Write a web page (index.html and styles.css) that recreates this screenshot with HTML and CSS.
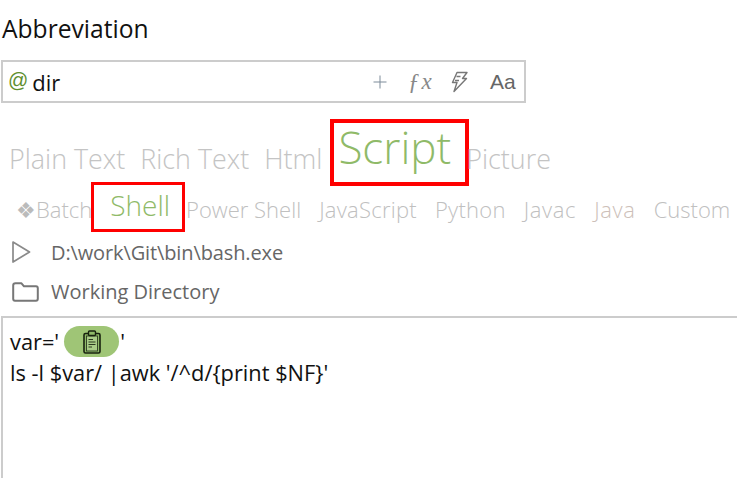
FILE: index.html
```
<!DOCTYPE html>
<html lang="en">
<head>
<meta charset="utf-8">
<title>Abbreviation</title>
<link rel="stylesheet" href="styles.css">
</head>
<body>
<main class="page">
  <h1 class="title">Abbreviation</h1>
  <div class="abbr-input">
    <span class="at">@</span>
    <span class="abbr-value">dir</span>
    <div class="tools">
      <svg class="tool-plus" width="14" height="14" viewBox="0 0 14 14"><path d="M7 0.5V13.5M0.5 7H13.5" stroke="#7d8b99" stroke-width="1" fill="none"/></svg>
      <span class="tool-fx">ƒx</span>
      <svg class="tool-bolt" width="20" height="22" viewBox="0 0 20 22"><path d="M8 1.5H18L13.5 7.5H17.5L5 20.5L8 11.5H3.5L8 1.5ZM7.5 5.5L11.5 5.5M6 9.5H10" stroke="#777" stroke-width="1.4" fill="none" stroke-linejoin="round"/></svg>
      <span class="tool-aa">Aa</span>
    </div>
  </div>
  <nav class="tabs">
    <span class="tab">Plain Text</span>
    <span class="tab">Rich Text</span>
    <span class="tab">Html</span>
    <span class="tab tab-active">Script</span>
    <span class="tab tab-last">Picture</span>
  </nav>
  <nav class="subtabs">
    <span class="sub sub-batch"><span class="diamonds">❖</span>Batch</span>
    <span class="sub sub-active">Shell</span>
    <span class="sub">Power Shell</span>
    <span class="sub sub-mid">JavaScript</span>
    <span class="sub sub-mid">Python</span>
    <span class="sub sub-wide">Javac</span>
    <span class="sub sub-wide sub-warm">Java</span>
    <span class="sub">Custom</span>
  </nav>
  <div class="path-row path-run">
    <svg width="20" height="24" viewBox="0 0 20 24"><path d="M2 2L18.500 12L2 22Z" stroke="#8a8a8a" stroke-width="1.700" fill="none" stroke-linejoin="round"/></svg>
    <span class="path-text">D:\work\Git\bin\bash.exe</span>
  </div>
  <div class="path-row path-dir">
    <svg width="27" height="20" viewBox="0 0 27 20"><path d="M1.200 3.500C1.200 2 2.200 1.300 3.500 1.300H9.500L12 4.300H24C25.200 4.300 25.800 5 25.800 6.200V16.800C25.800 18 25.200 18.700 24 18.700H3C1.800 18.700 1.200 18 1.200 16.800Z" stroke="#777777" stroke-width="2" fill="none" stroke-linejoin="round"/></svg>
    <span class="path-text">Working Directory</span>
  </div>
  <div class="editor">
    <div class="code-line">var='<span class="chip"><svg width="20" height="24" viewBox="0 0 20 24"><rect x="2" y="3.500" width="16" height="19.500" rx="1.500" fill="#8fba68" stroke="#18220f" stroke-width="1.600"/><rect x="4.500" y="6" width="11" height="15" fill="#a9cc87" stroke="#2c3a20" stroke-width="0.900"/><rect x="6.500" y="1" width="7" height="4.500" rx="1" fill="#8fba68" stroke="#18220f" stroke-width="1.400"/><path d="M6.500 9.500H11M6.500 12H13.500M6.500 14.500H13.500M6.500 17H10" stroke="#2c3a20" stroke-width="1.100"/></svg></span>'</div>
    <div class="code-line">ls -l $var/ |awk '/^d/{print $NF}'</div>
  </div>
</main>
</body>
</html>
```

FILE: styles.css
```
* { box-sizing: border-box; }
html, body { margin: 0; padding: 0; background: #fff; }
body { width: 737px; height: 478px; overflow: hidden; font-family: "Open Sans", "Noto Sans", sans-serif; }
.page { display: flex; flex-direction: column; height: 478px; }
.title { margin: 0; padding: 13px 0 0 2px; height: 60px; font-size: 24.600px; line-height: 32px; font-weight: 400; color: #111; }
.abbr-input { display: flex; align-items: center; width: 525px; height: 43px; margin-left: 1px; border: 2px solid #cccccc; padding: 0 7px 0 5px; }
.at { font-family: "Liberation Sans", sans-serif; font-size: 20px; color: #5f8f2f; margin-top: -4px; line-height: 24px; }
.abbr-value { font-size: 22px; line-height: 30px; margin-left: 4px; color: #111; }
.tools { margin-left: auto; display: flex; align-items: center; }
.tool-plus { margin-right: 21px; }
.tool-fx { font-family: "Liberation Serif", serif; font-style: italic; font-size: 23px; color: #888; width: 22px; letter-spacing: 2px; margin-right: 19px; }
.tool-bolt { margin-right: 21px; }
.tool-aa { font-family: "Liberation Sans", sans-serif; font-size: 21px; color: #666; width: 27px; }
.tabs { display: flex; align-items: flex-end; height: 82px; padding: 0 0 0 9px; }
.tab { font-size: 26.900px; font-weight: 300; color: #c4c4c4; line-height: 34px; margin: 0 15px 9px 0; }
.tab-active { font-size: 44px; line-height: 48px; color: #8fba68; outline: 4px solid #ff0000; margin: 0 0 3px -3px; padding: 0 14px 11px 4px; }
.tab-last { margin: 0 0 9px 1px; }
.subtabs { display: flex; align-items: flex-start; height: 47px; padding-left: 16px; white-space: nowrap; }
.sub { font-size: 22px; font-weight: 300; color: #c0c0c0; margin: 9px 18px 0 0; line-height: 30px; }
.sub-batch { margin-right: 0; }
.diamonds { font-family: "DejaVu Sans", sans-serif; font-size: 22px; color: #bbb; }
.sub-active { font-size: 28px; color: #8fba68; outline: 3px solid #ff0000; line-height: 39px; padding: 1px 12px 4px 16px; margin: 0 4px 0 2px; }
.sub-mid { letter-spacing: 0.250px; }
.sub-wide { letter-spacing: 0.650px; }
.sub-warm { color: #cdbfb9; }
.path-row { display: flex; align-items: center; padding-left: 11px; color: #666; font-size: 20px; font-weight: 400; }
.path-run { height: 40px; letter-spacing: -0.120px; }
.path-dir { height: 44px; padding: 0 0 5px 12px; }
.path-run .path-text { margin-left: 20px; }
.path-dir .path-text { margin-left: 12px; }
.editor { flex: 1; margin-left: 1px; border-left: 2px solid #ccc; border-top: 2px solid #ccc; padding: 8px 0 0 7px; font-size: 21.800px; color: #111; }
.code-line { display: flex; align-items: center; height: 31px; white-space: pre; }
.chip { display: inline-flex; align-items: center; justify-content: center; width: 55px; height: 31px; border-radius: 16px; background: #9fc576; margin: 0 1px 0 5px; }
```
